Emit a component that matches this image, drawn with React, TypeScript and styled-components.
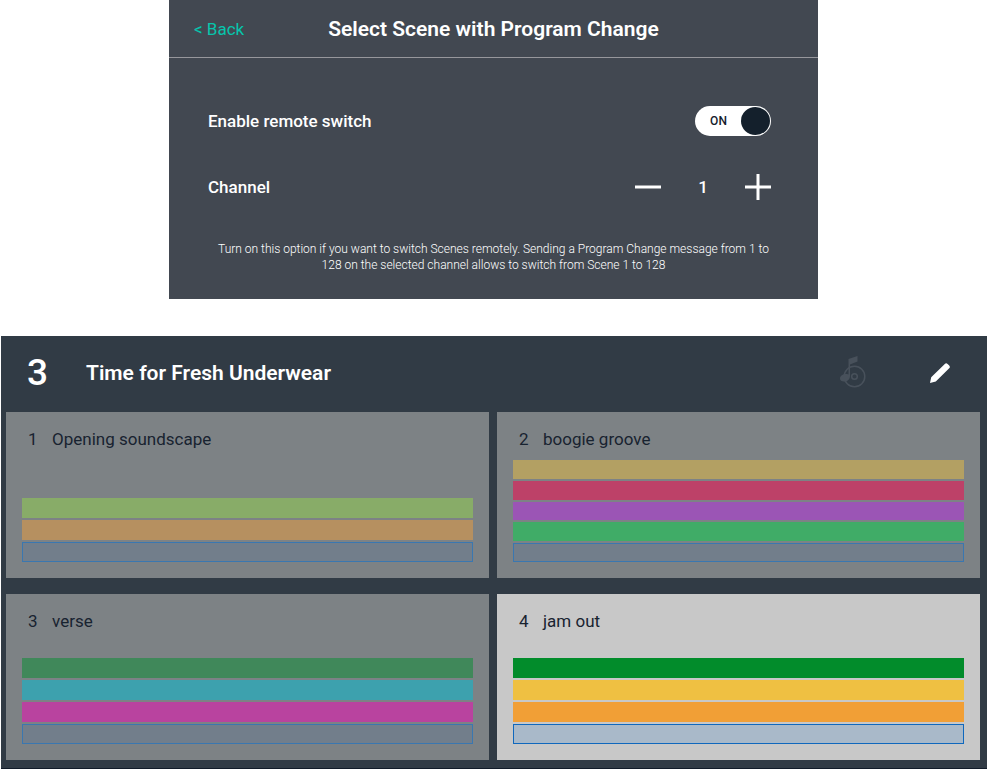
import React, { useState } from "react";
import styled, { createGlobalStyle } from "styled-components";

const GlobalStyle = createGlobalStyle`
  *, *::before, *::after { box-sizing: border-box; }
  body {
    margin: 0;
    background: #ffffff;
    font-family: Roboto, "Liberation Sans", sans-serif;
    -webkit-font-smoothing: antialiased;
  }
  h1, h2, h3, p { margin: 0; }
  button { padding: 0; border: 0; background: none; color: inherit; font: inherit; cursor: pointer; }
`;

const Page = styled.main`
  display: flex;
  flex-direction: column;
  gap: 37px;
`;

const Settings = styled.section`
  width: 100%;
  max-width: 649px;
  margin: 0 auto;
  background: #424851;
  color: #ffffff;
`;

const SettingsHeader = styled.header`
  display: grid;
  grid-template-columns: 1fr auto 1fr;
  align-items: center;
  height: 58px;
  padding: 0 25px;
  border-bottom: 1px solid #97979c;
`;

const BackLink = styled.a`
  color: #06c5ac;
  font-size: 17px;
  font-weight: 450;
  line-height: 22px;
  text-decoration: none;
`;

const Title = styled.h1`
  font-size: 21px;
  font-weight: 600;
  line-height: 28px;
`;

const SettingsBody = styled.div`
  display: flex;
  flex-direction: column;
  padding: 30px 47px 26px 39px;
`;

const SettingRow = styled.div`
  display: flex;
  align-items: center;
  justify-content: space-between;
  height: 66px;
  font-size: 17px;
  font-weight: 500;
`;

const SwitchTrack = styled.span`
  position: relative;
  display: flex;
  align-items: center;
  width: 76px;
  height: 30px;
  padding: 1px;
  border-radius: 15px;
  background: #ffffff;
  color: #14202c;
  font-size: 12px;
  font-weight: 500;
`;

const SwitchInput = styled.input`
  position: absolute;
  inset: 0;
  width: 100%;
  height: 100%;
  margin: 0;
  opacity: 0;
  cursor: pointer;
`;

const SwitchText = styled.span`
  flex: 1;
  text-align: center;
`;

const SwitchKnob = styled.span<{ $on: boolean }>`
  order: ${({ $on }) => ($on ? 1 : -1)};
  width: 29px;
  height: 28px;
  border-radius: 50%;
  background: #14202c;
`;

const Stepper = styled.div`
  display: grid;
  grid-template-columns: 26px 84px 26px;
  align-items: center;
  text-align: center;
`;

const StepButton = styled.button`
  display: flex;
  height: 26px;
`;

const Hint = styled.p`
  padding: 21px 0 0 8px;
  font-size: 12px;
  font-weight: 300;
  line-height: 16px;
  text-align: center;
`;

const Song = styled.section`
  margin-left: 1px;
  padding: 0 7px 8px 5px;
  border-bottom: 1px solid #111b29;
  background: #313b45;
`;

const SongHeader = styled.header`
  display: flex;
  align-items: center;
  height: 76px;
  padding: 0 30px 3px 21px;
  color: #ffffff;
`;

const SongNumber = styled.span`
  width: 59px;
  font-size: 37px;
  font-weight: 500;
  line-height: 42px;
`;

const SongName = styled.h2`
  flex: 1;
  font-size: 21px;
  font-weight: 600;
  line-height: 28px;
`;

const SongActions = styled.div`
  display: flex;
  align-items: center;
  gap: 63px;
`;

const IconButton = styled.button`
  display: flex;
`;

const SceneGrid = styled.div`
  display: grid;
  grid-template-columns: repeat(auto-fit, minmax(360px, 1fr));
  gap: 16px 8px;
`;

const SceneCard = styled.article<{ $active: boolean }>`
  display: flex;
  flex-direction: column;
  gap: 6px;
  padding: 16px;
  background: ${({ $active }) => ($active ? "#c8c8c8" : "#7d8285")};
  color: #182330;
`;

const SceneTitle = styled.h3`
  display: flex;
  height: 26px;
  padding-left: 6px;
  font-size: 17px;
  font-weight: 450;
  line-height: 22px;
`;

const SceneNumber = styled.span`
  width: 24px;
`;

const Tracks = styled.div`
  display: flex;
  flex-direction: column;
  justify-content: flex-end;
  gap: 2px;
  height: 102px;
`;

const Track = styled.div<{ $color: string; $outline?: string }>`
  flex: 0 1 20px;
  min-height: 0;
  border: ${({ $outline }) => ($outline ? `1px solid ${$outline}` : "0")};
  background: ${({ $color }) => $color};
`;

type TrackData = { color: string; outline?: string };
type Scene = { name: string; active?: boolean; tracks: TrackData[] };

const emptyTrack: TrackData = { color: "#727e8b", outline: "#3a77b0" };

const scenes: Scene[] = [
  {
    name: "Opening soundscape",
    tracks: [{ color: "#88ac68" }, { color: "#b69060" }, emptyTrack],
  },
  {
    name: "boogie groove",
    tracks: [
      { color: "#b3a063" },
      { color: "#bd4168" },
      { color: "#9b55b5" },
      { color: "#40ac67" },
      emptyTrack,
    ],
  },
  {
    name: "verse",
    tracks: [{ color: "#40885a" }, { color: "#3da1ae" }, { color: "#b9439f" }, emptyTrack],
  },
  {
    name: "jam out",
    active: true,
    tracks: [
      { color: "#028c2b" },
      { color: "#efc042" },
      { color: "#f19f36" },
      { color: "#a9b9c9", outline: "#1068bd" },
    ],
  },
];

const MinusIcon = () => (
  <svg width="26" height="26" viewBox="0 0 26 26" aria-hidden="true">
    <path d="M0 13H26" stroke="#fff" strokeWidth="3" />
  </svg>
);

const PlusIcon = () => (
  <svg width="26" height="26" viewBox="0 0 26 26" aria-hidden="true">
    <path d="M0 13H26M13 0V26" stroke="#fff" strokeWidth="3" />
  </svg>
);

const DiscNoteIcon = () => (
  <svg width="27" height="34" viewBox="0 0 27 34" fill="none" aria-hidden="true">
    <circle cx="14.500" cy="20.500" r="10.300" stroke="#48515b" strokeWidth="1.500" />
    <circle cx="14.500" cy="20.500" r="2.800" stroke="#48515b" strokeWidth="1.500" />
    <path
      d="M8.500 3L17.500 0V5.500L10 8.500V20C10 23.500 7.500 25.500 4 25.500C1.500 25.500 0 24.500 0 22.500C0 19.500 3.500 17.500 7 18L8.500 18.500Z"
      fill="#48515b"
    />
  </svg>
);

const PencilIcon = () => (
  <svg width="20" height="20" viewBox="0 0 20 20" aria-hidden="true">
    <path
      d="M0 20L1.200 14.300L14.800 0.900Q16.200 -0.500 17.600 0.900L19.200 2.500Q20.500 3.900 19.200 5.300L5.800 18.400Z"
      fill="#fff"
    />
  </svg>
);

export default function App() {
  const [remote, setRemote] = useState(true);
  const [channel, setChannel] = useState(1);

  return (
    <>
      <GlobalStyle />
      <Page>
        <Settings>
          <SettingsHeader>
            <BackLink href="#back">&lt; Back</BackLink>
            <Title>Select Scene with Program Change</Title>
          </SettingsHeader>
          <SettingsBody>
            <SettingRow>
              <label htmlFor="remote-switch">Enable remote switch</label>
              <SwitchTrack>
                <SwitchText>{remote ? "ON" : "OFF"}</SwitchText>
                <SwitchKnob $on={remote} />
                <SwitchInput
                  id="remote-switch"
                  type="checkbox"
                  role="switch"
                  checked={remote}
                  onChange={(e) => setRemote(e.target.checked)}
                />
              </SwitchTrack>
            </SettingRow>
            <SettingRow>
              <span id="channel-label">Channel</span>
              <Stepper role="group" aria-labelledby="channel-label">
                <StepButton
                  type="button"
                  aria-label="Previous channel"
                  onClick={() => setChannel((c) => Math.max(1, c - 1))}
                >
                  <MinusIcon />
                </StepButton>
                <output aria-labelledby="channel-label">{channel}</output>
                <StepButton
                  type="button"
                  aria-label="Next channel"
                  onClick={() => setChannel((c) => Math.min(16, c + 1))}
                >
                  <PlusIcon />
                </StepButton>
              </Stepper>
            </SettingRow>
            <Hint>
              Turn on this option if you want to switch Scenes remotely. Sending a Program Change
              message from 1 to 128 on the selected channel allows to switch from Scene 1 to 128
            </Hint>
          </SettingsBody>
        </Settings>

        <Song>
          <SongHeader>
            <SongNumber>3</SongNumber>
            <SongName>Time for Fresh Underwear</SongName>
            <SongActions>
              <IconButton type="button" aria-label="Song audio">
                <DiscNoteIcon />
              </IconButton>
              <IconButton type="button" aria-label="Edit song">
                <PencilIcon />
              </IconButton>
            </SongActions>
          </SongHeader>
          <SceneGrid>
            {scenes.map((scene, i) => (
              <SceneCard key={scene.name} $active={!!scene.active}>
                <SceneTitle>
                  <SceneNumber>{i + 1}</SceneNumber>
                  {scene.name}
                </SceneTitle>
                <Tracks>
                  {scene.tracks.map((track, t) => (
                    <Track key={t} $color={track.color} $outline={track.outline} />
                  ))}
                </Tracks>
              </SceneCard>
            ))}
          </SceneGrid>
        </Song>
      </Page>
    </>
  );
}
